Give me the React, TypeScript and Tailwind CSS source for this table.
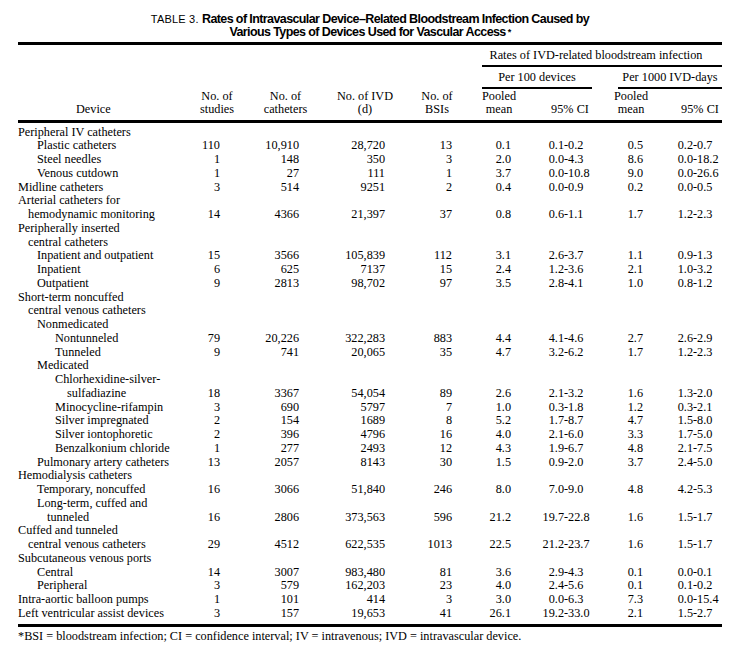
type Line = [string, number];
type Row = { l: Line[]; v?: string[] };

const rows: Row[] = [
  { l: [["Peripheral IV catheters", 0]] },
  { l: [["Plastic catheters", 19]], v: ["110", "10,910", "28,720", "13", "0.1", "0.1-0.2", "0.5", "0.2-0.7"] },
  { l: [["Steel needles", 19]], v: ["1", "148", "350", "3", "2.0", "0.0-4.3", "8.6", "0.0-18.2"] },
  { l: [["Venous cutdown", 19]], v: ["1", "27", "111", "1", "3.7", "0.0-10.8", "9.0", "0.0-26.6"] },
  { l: [["Midline catheters", 0]], v: ["3", "514", "9251", "2", "0.4", "0.0-0.9", "0.2", "0.0-0.5"] },
  { l: [["Arterial catheters for", 0], ["hemodynamic monitoring", 10]], v: ["14", "4366", "21,397", "37", "0.8", "0.6-1.1", "1.7", "1.2-2.3"] },
  { l: [["Peripherally inserted", 0], ["central catheters", 10]] },
  { l: [["Inpatient and outpatient", 19]], v: ["15", "3566", "105,839", "112", "3.1", "2.6-3.7", "1.1", "0.9-1.3"] },
  { l: [["Inpatient", 19]], v: ["6", "625", "7137", "15", "2.4", "1.2-3.6", "2.1", "1.0-3.2"] },
  { l: [["Outpatient", 19]], v: ["9", "2813", "98,702", "97", "3.5", "2.8-4.1", "1.0", "0.8-1.2"] },
  { l: [["Short-term noncuffed", 0], ["central venous catheters", 10]] },
  { l: [["Nonmedicated", 19]] },
  { l: [["Nontunneled", 37]], v: ["79", "20,226", "322,283", "883", "4.4", "4.1-4.6", "2.7", "2.6-2.9"] },
  { l: [["Tunneled", 37]], v: ["9", "741", "20,065", "35", "4.7", "3.2-6.2", "1.7", "1.2-2.3"] },
  { l: [["Medicated", 19]] },
  { l: [["Chlorhexidine-silver-", 37], ["sulfadiazine", 49]], v: ["18", "3367", "54,054", "89", "2.6", "2.1-3.2", "1.6", "1.3-2.0"] },
  { l: [["Minocycline-rifampin", 37]], v: ["3", "690", "5797", "7", "1.0", "0.3-1.8", "1.2", "0.3-2.1"] },
  { l: [["Silver impregnated", 37]], v: ["2", "154", "1689", "8", "5.2", "1.7-8.7", "4.7", "1.5-8.0"] },
  { l: [["Silver iontophoretic", 37]], v: ["2", "396", "4796", "16", "4.0", "2.1-6.0", "3.3", "1.7-5.0"] },
  { l: [["Benzalkonium chloride", 37]], v: ["1", "277", "2493", "12", "4.3", "1.9-6.7", "4.8", "2.1-7.5"] },
  { l: [["Pulmonary artery catheters", 19]], v: ["13", "2057", "8143", "30", "1.5", "0.9-2.0", "3.7", "2.4-5.0"] },
  { l: [["Hemodialysis catheters", 0]] },
  { l: [["Temporary, noncuffed", 19]], v: ["16", "3066", "51,840", "246", "8.0", "7.0-9.0", "4.8", "4.2-5.3"] },
  { l: [["Long-term, cuffed and", 19], ["tunneled", 29]], v: ["16", "2806", "373,563", "596", "21.2", "19.7-22.8", "1.6", "1.5-1.7"] },
  { l: [["Cuffed and tunneled", 0], ["central venous catheters", 10]], v: ["29", "4512", "622,535", "1013", "22.5", "21.2-23.7", "1.6", "1.5-1.7"] },
  { l: [["Subcutaneous venous ports", 0]] },
  { l: [["Central", 19]], v: ["14", "3007", "983,480", "81", "3.6", "2.9-4.3", "0.1", "0.0-0.1"] },
  { l: [["Peripheral", 19]], v: ["3", "579", "162,203", "23", "4.0", "2.4-5.6", "0.1", "0.1-0.2"] },
  { l: [["Intra-aortic balloon pumps", 0]], v: ["1", "101", "414", "3", "3.0", "0.0-6.3", "7.3", "0.0-15.4"] },
  { l: [["Left ventricular assist devices", 0]], v: ["3", "157", "19,653", "41", "26.1", "19.2-33.0", "2.1", "1.5-2.7"] },
];

const cols = "grid grid-cols-[172px_54px_83px_76px_68px_56px_86px_36px_73px]";

function Ci({ value, w }: { value: string; w: string }) {
  const i = value.indexOf("-");
  return (
    <div className="flex self-end whitespace-nowrap">
      <span className={`${w} text-right`}>{value.slice(0, i)}</span>
      <span>{value.slice(i)}</span>
    </div>
  );
}

function DataRow({ row }: { row: Row }) {
  const v = row.v;
  return (
    <>
      <div className="flex flex-col">
        {row.l.map(([t, pad]) => (
          <div key={t} className="whitespace-nowrap" style={{ paddingLeft: pad }}>
            {t}
          </div>
        ))}
      </div>
      {v ? (
        <>
          <div className="self-end text-right pr-[24px]">{v[0]}</div>
          <div className="self-end text-right pr-[28px]">{v[1]}</div>
          <div className="self-end text-right pr-[18px]">{v[2]}</div>
          <div className="self-end text-right pr-[19px]">{v[3]}</div>
          <div className="self-end text-right pr-[16px]">{v[4]}</div>
          <Ci value={v[5]} w="w-[37px]" />
          <div className="self-end text-right pr-[6px]">{v[6]}</div>
          <Ci value={v[7]} w="w-[44px]" />
        </>
      ) : (
        <div className="col-span-8" />
      )}
    </>
  );
}

export default function App() {
  return (
    <div className="min-h-[651px] w-[735px] bg-white pl-[18px] pt-[13px] text-black font-['Liberation_Serif',serif] text-[12.25px] leading-[13.75px]">
      <div className="w-[704px]">
        <div className="text-center font-['Liberation_Sans_Narrow','Liberation_Sans',sans-serif] leading-[13px]">
          <div>
            <span className="text-[11px] tracking-[0.2px]">TABLE 3. </span>
            <span className="text-[12.5px] font-bold tracking-[-0.6px]">Rates of Intravascular Device–Related Bloodstream Infection Caused by</span>
          </div>
          <div className="text-[12.5px] font-bold tracking-[-0.6px]">
            Various Types of Devices Used for Vascular Access<span className="align-top text-[9px] pl-[2px]">*</span>
          </div>
        </div>

        <div className="mt-[3px] h-[3px] bg-black" />

        <div className={`${cols} grid-rows-[auto_auto_auto]`}>
          <div className="row-span-3 self-end pb-[2.5px] pl-[58px]">Device</div>
          <div className="row-span-3 self-end pb-[2.5px] text-center">No. of<br />studies</div>
          <div className="row-span-3 self-end pb-[2.5px] text-center">No. of<br />catheters</div>
          <div className="row-span-3 self-end pb-[2.5px] text-center">No. of IVD<br />(d)</div>
          <div className="row-span-3 self-end pb-[2.5px] text-center">No. of<br />BSIs</div>
          <div className="col-span-4 ml-[11px] border-b-2 border-black pt-[4px] pb-[2px] pr-[12px] text-center whitespace-nowrap">
            Rates of IVD-related bloodstream infection
          </div>
          <div className="col-span-2 ml-[11px] mr-[21px] border-b-2 border-black pt-[4px] pb-[2px] text-center whitespace-nowrap">
            Per 100 devices
          </div>
          <div className="col-span-2 ml-[5px] border-b-2 border-black pt-[4px] pb-[2px] text-center whitespace-nowrap">
            Per 1000 IVD-days
          </div>
          <div className="self-end pt-[1px] pb-[2.5px] text-center">Pooled<br />mean</div>
          <div className="self-end pb-[2.5px] text-center">95% CI</div>
          <div className="self-end pt-[1px] pb-[2.5px] text-center">Pooled<br />mean</div>
          <div className="self-end pb-[2.5px] pl-[29px] text-center">95% CI</div>
        </div>

        <div className="h-[3px] bg-black" />

        <div className={`${cols} pt-[3px] pb-[3px]`}>
          {rows.map((r, i) => (
            <DataRow key={i} row={r} />
          ))}
        </div>

        <div className="h-[3px] bg-black" />

        <div className="mt-[3px] whitespace-nowrap">
          *BSI = bloodstream infection; CI = confidence interval; IV = intravenous; IVD = intravascular device.
        </div>
      </div>
    </div>
  );
}
